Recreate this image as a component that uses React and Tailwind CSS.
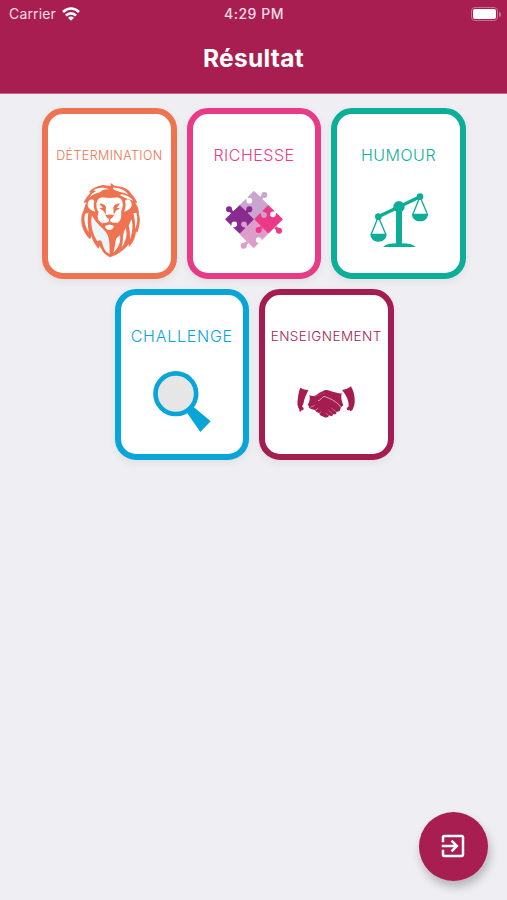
import { MdExitToApp } from "react-icons/md";

const LionIcon = () => (
  <svg viewBox="0 0 216 246" className="h-[82px] w-[72px]">
    <path
      fill="#ef7350"
      d="M110 15C118 21 124 25 130 25C150 26 166 36 172 48C180 56 186 66 190 74L184 74C194 88 196 102 194 108C200 122 198 142 190 164L186 160C184 180 178 194 164 208L164 198C156 210 140 222 132 227C124 232 116 234 108 238C98 232 88 226 82 212L76 204L74 212C60 198 54 182 53 174L48 184C30 166 18 142 23 112L29 96C32 86 34 80 37 73L28 75C34 62 42 52 49 44L45 42C56 30 68 24 86 21L110 24Z"
    />
    {/* mane highlights */}
    <g fill="#fff">
      <path d="M58 37C72 27 90 27 106 34C90 33 84 37 78 43C68 46 56 48 46 60C50 50 56 44 66 40Z" />
      <path d="M116 29C134 29 154 34 163 50C150 42 136 42 120 35Z" />
      <path d="M140 48C158 51 170 58 178 68C166 64 154 60 140 53Z" />
      <path d="M33 108C29 124 33 146 44 162C41 140 40 122 43 104Z" />
      <path d="M187 104C192 122 190 138 183 152C184 134 182 118 178 106Z" />
      <path d="M172 124C178 140 175 166 168 184C168 168 168 154 164 144Z" />
      <path d="M154 150C162 166 156 190 143 208C147 192 147 178 148 168Z" />
      <path d="M138 172C141 192 134 210 118 224C125 204 122 192 128 180Z" />
    </g>
    <path
      fill="#edf5f9"
      d="M54 112C62 130 80 146 90 156C102 168 108 180 107 228C96 224 88 212 84 192L78 186L70 190C55 168 48 136 54 112Z"
    />
    {/* ears */}
    <g fill="#fff">
      <path d="M41 82C40 66 54 60 61 69C57 80 60 92 64 101C52 98 43 92 41 82Z" />
      <path d="M173 82C174 66 160 60 153 69C157 80 154 92 150 101C162 98 171 92 173 82Z" />
    </g>
    {/* face */}
    <path
      fill="#fff"
      d="M74 62C84 56 92 60 106 60C120 60 132 56 141 63C150 74 146 90 141 102C144 120 138 132 128 136C120 140 112 134 107 132C100 136 88 140 82 134C72 128 68 116 74 102C66 90 64 74 74 62Z"
    />
    <path fill="#fff" d="M93 145C101 139 112 139 120 145C118 152 112 156 106 156C98 156 94 151 93 145Z" />
    <g fill="#ef7350">
      <path d="M76 77C85 76 93 80 96 87L95 112L89 99L76 91L86 89Z" />
      <path d="M138 77C129 76 121 80 118 87L119 112L125 99L138 91L128 89Z" />
      <path d="M94 112C102 109 112 109 120 112C116 120 111 123 107 123C103 123 98 119 94 112Z" />
    </g>
    <path
      fill="none"
      stroke="#ef7350"
      strokeWidth="4"
      d="M107 120V132M86 135C96 139 102 135 107 131C112 135 118 139 128 135"
    />
  </svg>
);

const PuzzleIcon = () => (
  <svg viewBox="0 -18 216 246" className="h-[82px] w-[72px]">
    <g fill="#c9a5d0" stroke="#c9a5d0">
      <path strokeWidth="4" strokeLinejoin="round" d="M108 23L149 64L108 105L67 64Z" />
      <path strokeWidth="9" d="M126 45L137 34" />
      <circle cx="139" cy="33" r="9" stroke="none" />
    </g>
    <g fill="#dc9dca" stroke="#dc9dca">
      <path strokeWidth="4" strokeLinejoin="round" d="M107 108L148 149L107 190L66 149Z" />
      <path strokeWidth="9" d="M88 174L78 184" />
      <circle cx="77" cy="185" r="9" stroke="none" />
    </g>
    <g fill="#872b91" stroke="#872b91">
      <path strokeWidth="4" strokeLinejoin="round" d="M65 66L105 106L65 146L24 106Z" />
      <path strokeWidth="9" d="M45 87L34 76M84 86L94 76" />
      <circle cx="33" cy="76" r="9" stroke="none" />
      <circle cx="94" cy="76" r="9" stroke="none" />
    </g>
    <g fill="#ec3889" stroke="#ec3889">
      <path strokeWidth="4" strokeLinejoin="round" d="M151 66L192 106L151 146L111 106Z" />
      <path strokeWidth="9" d="M172 130L183 140M131 129L122 138" />
      <circle cx="183" cy="140" r="9" stroke="none" />
      <circle cx="122" cy="138" r="9" stroke="none" />
    </g>
    <path stroke="#c9a5d0" strokeWidth="9" d="M128 82L137 92" />
    <circle cx="138" cy="93" r="8.5" fill="#c9a5d0" />
    <path stroke="#dc9dca" strokeWidth="9" d="M87 131L78 122" />
    <circle cx="78" cy="121" r="8.5" fill="#dc9dca" />
    {/* sockets on the outer edges */}
    <g fill="#fff" stroke="#fff" strokeWidth="7">
      <path d="M80 36L94 50M180 76L166 90M34 136L48 122M136 182L122 168" />
      <circle cx="94" cy="50" r="5" />
      <circle cx="165" cy="91" r="5" />
      <circle cx="49" cy="121" r="5" />
      <circle cx="122" cy="168" r="5" />
    </g>
  </svg>
);

const ScaleIcon = () => (
  <svg viewBox="0 -18 216 246" className="h-[82px] w-[72px]" fill="#0dae98">
    <path d="M99 68H117V178C136 178 150 181 158 189H60C68 181 82 178 99 178Z" />
    <circle cx="108" cy="68" r="17" />
    <circle cx="46" cy="98" r="10" />
    <circle cx="171" cy="38" r="10" />
    <path d="M46 98L171 38" stroke="#0dae98" strokeWidth="10" />
    <path
      d="M46 98L25 150M46 98L68 150M171 38L150 90M171 38L193 90"
      stroke="#0dae98"
      strokeWidth="4"
    />
    <path d="M22 149H71C71 163 61 173 46 173C32 173 22 163 22 149Z" />
    <path d="M147 89H195C195 103 185 112 171 112C157 112 147 103 147 89Z" />
  </svg>
);

const MagnifierIcon = () => (
  <svg viewBox="114 231 216 246" className="h-[82px] w-[72px]">
    <path fill="#07a5d8" d="M236 391L257 375L308 418L277 450Z" />
    <circle cx="203.500" cy="335" r="61" fill="#e6e6e6" stroke="#07a5d8" strokeWidth="14" />
  </svg>
);

const HandshakeIcon = () => (
  <svg viewBox="0 -48 216 246" className="h-[82px] w-[72px]" fill="#a51c50">
    <path d="M31 38C38 43 46 44 55 45C50 58 42 71 40 87L36 94L41 99C41 105 38 108 34 106L31 110C28 110 27 106 28 102C22 96 21 82 24 68C25 57 27 47 31 38Z" />
    <path d="M183 34C175 41 166 44 156 45C164 55 171 66 175 80L176 94L170 100C171 106 175 107 178 104L180 108C185 109 189 104 190 98C195 90 195 75 193 62C191 51 188 43 183 34Z" />
    <path d="M58 60C67 66 76 63 84 56C92 50 98 50 104 46C112 42 120 48 128 50C138 52 146 56 155 55C152 68 155 79 160 91C154 95 152 99 151 103C150 110 144 111 139 110C140 117 135 119 130 117C128 124 123 125 117 121C116 128 108 129 102 126L96 123C91 123 89 119 88 115L79 110L73 104L63 102C57 99 55 96 57 93L53 90C59 80 61 70 58 60Z" />
    <g fill="none" stroke="#fff">
      <path strokeWidth="1.8" d="M84 77C91 77 94 68 102 64C113 68 127 73 134 79C142 84 148 90 153 98" />
      <path strokeWidth="1.4" opacity="0.75" d="M124 99L138 110M116 106L128 117M107 114L116 121" />
      <path strokeWidth="1.6" opacity="0.8" d="M61 97L74 91M75 107L84 100M86 117L94 109" />
      <path strokeWidth="1" opacity="0.4" d="M72 66L104 53" />
    </g>
  </svg>
);

const cards = [
  {
    name: "DÉTERMINATION",
    Icon: LionIcon,
    frame: "border-[#ef7350]",
    label: "pt-[2px] text-[12.5px] tracking-[0.4px] text-[#ef7350]",
  },
  {
    name: "RICHESSE",
    Icon: PuzzleIcon,
    frame: "border-[#e73b85]",
    label: "pt-[1px] text-[16px] tracking-[0.5px] text-[#e73b85]",
  },
  {
    name: "HUMOUR",
    Icon: ScaleIcon,
    frame: "border-[#0dae98]",
    label: "pt-[1px] text-[16px] tracking-[0.5px] text-[#0dae98]",
  },
  {
    name: "CHALLENGE",
    Icon: MagnifierIcon,
    frame: "border-[#07a5d8]",
    label: "pt-[1px] text-[16px] tracking-[0.75px] text-[#07a5d8]",
  },
  {
    name: "ENSEIGNEMENT",
    Icon: HandshakeIcon,
    frame: "border-[#a51c50]",
    label: "pt-[1px] text-[13.5px] tracking-[0.45px] text-[#a51c50]",
  },
];

const ResultCard = ({ name, Icon, frame, label }) => (
  <div
    className={`flex h-[171px] w-[134.5px] flex-col items-center rounded-[21px] border-[6px] bg-white pt-[30px] shadow-[0_3px_8px_rgba(0,0,0,0.06)] ${frame}`}
  >
    <p className={`flex h-[33.5px] items-start whitespace-nowrap font-light leading-5 ${label}`}>
      {name}
    </p>
    <Icon />
  </div>
);

const StatusBar = () => (
  <div className="grid h-7 grid-cols-3 items-center pl-[9px] pr-[6px] text-[14px] leading-none text-[#f7dfe8]">
    <div className="flex items-center gap-[6px]">
      <span className="tracking-[0.15px]">Carrier</span>
      <svg viewBox="0 0 54 42" className="h-[14px] w-[18px]" fill="none" stroke="#fff" strokeWidth="8">
        <path d="M3 15C17 1 37 1 51 15" />
        <path d="M12 26C20 17 34 17 42 26" />
        <path d="M27 41L18 32C23 27 31 27 36 32Z" fill="#fff" stroke="none" />
      </svg>
    </div>
    <span className="-ml-[2px] text-center font-medium tracking-[0.5px]">4:29 PM</span>
    <div className="flex items-center justify-end gap-px">
      <div className="h-[14px] w-[27px] rounded-[4px] border border-[#c9708f] p-px">
        <div className="h-full w-full rounded-[2px] bg-white" />
      </div>
      <div className="h-[5px] w-[2px] rounded-r-full bg-[#c9708f]" />
    </div>
  </div>
);

const App = () => {
  return (
    <div className="relative flex h-[900px] w-[507px] flex-col overflow-hidden bg-[#eeeef3] font-['Inter',sans-serif]">
      <header className="h-[94px] border-b border-[#c9688a] bg-[#a91e50]">
        <StatusBar />
        <h1 className="pt-[14px] text-center text-[24.5px] font-bold leading-8 tracking-[0.3px] text-white">
          Résultat
        </h1>
      </header>

      <main className="flex flex-wrap justify-center gap-[10px] pl-[1px] pt-[14.400px]">
        {cards.map((card) => (
          <ResultCard key={card.name} {...card} />
        ))}
      </main>

      <button className="absolute bottom-[19.500px] right-[19.500px] flex size-[69px] items-center justify-center rounded-full bg-[#a91e50] text-white shadow-[2px_6px_10px_rgba(0,0,0,0.24)]">
        <MdExitToApp className="size-[30px]" />
      </button>
    </div>
  );
};

export default App;
